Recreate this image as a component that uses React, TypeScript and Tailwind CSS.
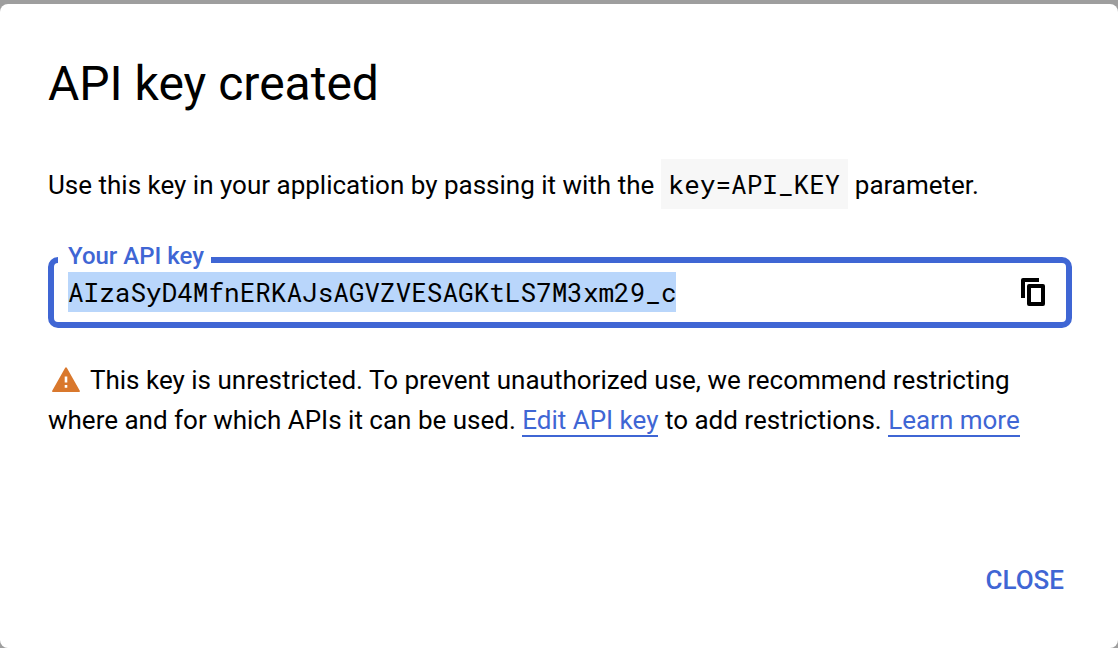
function WarningIcon() {
  return (
    <svg aria-label="Warning" role="img" viewBox="0 0 28 25" className="mr-1 ml-1 inline-block h-[25px] w-7 align-[-3px]">
      <path fill="#d9782d" fillRule="evenodd" d="M13.2.7a.9.9 0 0 1 1.6 0l13 23a.9.9 0 0 1-.8 1.3H1a.9.9 0 0 1-.8-1.3ZM12.7 9.5v6h2.6v-6Zm0 8.5v2.7h2.6V18Z" />
    </svg>
  )
}

function CopyIcon() {
  return (
    <svg aria-hidden="true" viewBox="0 0 24 28" className="block h-7 w-6">
      <path fill="#000" fillRule="evenodd" d="M2 0H18V4H4V20H0V2A2 2 0 0 1 2 0ZM8 6H22A2 2 0 0 1 24 8V26A2 2 0 0 1 22 28H8A2 2 0 0 1 6 26V8A2 2 0 0 1 8 6ZM10 10V24H20V10Z" />
    </svg>
  )
}

const linkClass = 'border-b-2 border-[#3f66d4] text-[#3f66d4]'

export default function App() {
  return (
    <main className="min-h-screen bg-[#9e9e9e] pt-1 font-['Roboto',sans-serif] text-black">
      <section
        role="dialog"
        aria-labelledby="dialog-title"
        className="flex min-h-[calc(100vh-4px)] flex-col rounded-lg bg-white pt-12 pr-[46px] pb-12 pl-12"
      >
        <h1 id="dialog-title" className="text-[48px] leading-[64px]">API key created</h1>
        <p className="mt-10 text-[26px] leading-[58px]">
          Use this key in your application by passing it with the{' '}
          <code className="inline-block bg-[#f7f7f7] px-2 font-['Roboto_Mono','Liberation_Mono',monospace] text-[26px] leading-[50px]">key=API_KEY</code>{' '}
          parameter.
        </p>

        <div className="relative mt-[43px] flex h-[71px] items-center justify-between rounded-[10px] border-[6px] border-[#3f66d4] pr-[21px] pb-px pl-3.5">
          <label htmlFor="api-key" className="absolute -top-[19px] left-1 bg-white pr-[7px] pl-2.5 text-[24px] leading-6 font-medium text-[#3f66d4]">
            Your API key
          </label>
          <input
            id="api-key"
            readOnly
            defaultValue="AIzaSyD4MfnERKAJsAGVZVESAGKtLS7M3xm29_c"
            className="h-10 w-[608px] bg-[#b9d6fb] font-['Roboto_Mono','Liberation_Mono',monospace] text-[26px] outline-none"
          />
          <button type="button" aria-label="Copy to clipboard">
            <CopyIcon />
          </button>
        </div>

        <p className="mt-8 text-[26px] leading-10">
          <WarningIcon /> This key is unrestricted. To prevent unauthorized use, we recommend restricting where and for which APIs it can be used.{' '}
          <a href="#edit" className={linkClass}>Edit API key</a> to add restrictions.{' '}
          <a href="#learn" className={linkClass}>Learn more</a>
        </p>

        <button type="button" className="mt-auto mr-2 self-end text-[26px] leading-10 font-medium text-[#3f66d4]">CLOSE</button>
      </section>
    </main>
  )
}
